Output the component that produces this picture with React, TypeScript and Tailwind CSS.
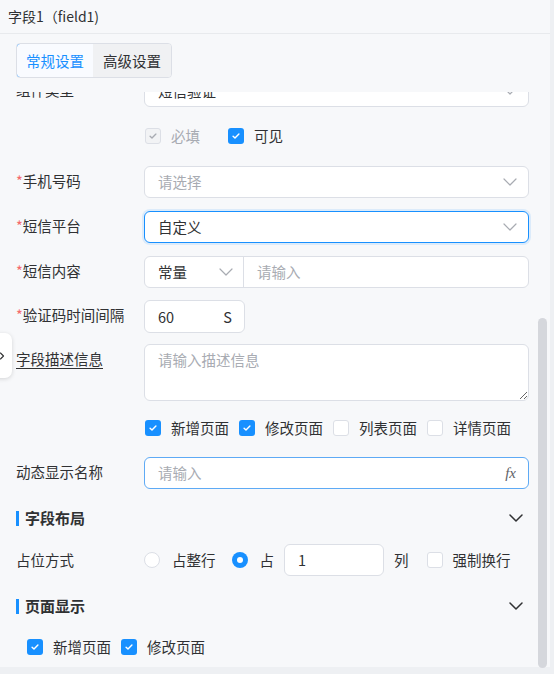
import { ChevronRight } from "lucide-react";

const font = { fontFamily: '"Noto Sans CJK SC", "Noto Sans", sans-serif' };

function Chevron({ dark = false }: { dark?: boolean }) {
  return (
    <svg viewBox="0 0 14 8" className="h-[8px] w-[14px] shrink-0">
      <path
        d="M1 1l6 6 6-6"
        fill="none"
        stroke={dark ? "#303133" : "#a8abb2"}
        strokeWidth={dark ? 1.5 : 1.2}
        strokeLinecap="round"
        strokeLinejoin="round"
      />
    </svg>
  );
}

function Box({ checked = false, disabled = false }: { checked?: boolean; disabled?: boolean }) {
  if (disabled) {
    return (
      <span className="flex h-4 w-4 shrink-0 items-center justify-center rounded-[3px] border border-[#dcdfe6] bg-[#f2f3f5]">
        <svg viewBox="0 0 12 12" className="h-[10px] w-[10px]">
          <path d="M2.5 6.2l2.3 2.3 4.7-4.8" fill="none" stroke="#a8abb2" strokeWidth="1.6" strokeLinecap="round" strokeLinejoin="round" />
        </svg>
      </span>
    );
  }
  return checked ? (
    <span className="flex h-4 w-4 shrink-0 items-center justify-center rounded-[3px] bg-[#1890ff]">
      <svg viewBox="0 0 12 12" className="h-[10px] w-[10px]">
        <path d="M2.5 6.2l2.3 2.3 4.7-4.8" fill="none" stroke="#fff" strokeWidth="1.7" strokeLinecap="round" strokeLinejoin="round" />
      </svg>
    </span>
  ) : (
    <span className="h-4 w-4 shrink-0 rounded-[3px] border border-[#dcdfe6] bg-white" />
  );
}

function CheckItem({ label, checked, disabled }: { label: string; checked?: boolean; disabled?: boolean }) {
  return (
    <span className="flex items-center gap-[10px]">
      <Box checked={checked} disabled={disabled} />
      <span className={disabled ? "text-[#a8abb2]" : "text-[#303133]"}>{label}</span>
    </span>
  );
}

function Label({ text, required, underline }: { text: string; required?: boolean; underline?: boolean }) {
  return (
    <div className="w-[128px] shrink-0 whitespace-nowrap leading-[30px] text-[#303133]">
      {required ? <span className="text-[#f56c6c]">*</span> : null}
      <span className={underline ? "underline underline-offset-[3px]" : ""}>{text}</span>
    </div>
  );
}

function Select({ value, placeholder, focused }: { value?: string; placeholder?: string; focused?: boolean }) {
  return (
    <div
      className={
        "flex h-8 flex-1 items-center justify-between rounded-[6px] border bg-white pl-[13px] pr-[11px] " +
        (focused ? "border-[#1890ff] shadow-[0_0_0_2px_rgba(24,144,255,0.12)]" : "border-[#dcdfe6]")
      }
    >
      <span className={value ? "text-[#303133]" : "text-[#a8abb2]"}>{value ?? placeholder}</span>
      <Chevron />
    </div>
  );
}

function Section({ title }: { title: string }) {
  return (
    <div className="flex h-8 items-center justify-between pr-[6px]">
      <div className="flex items-center gap-[6px]">
        <span className="h-[15px] w-[3px] bg-[#1890ff]" />
        <span className="text-[15px] font-bold text-[#303133]">{title}</span>
      </div>
      <Chevron dark />
    </div>
  );
}

export default function App() {
  return (
    <div className="h-[674px] w-[554px] overflow-hidden bg-[#eef0f3] text-[14.5px]" style={font}>
      <div className="relative flex h-[667px] w-[550px] flex-col bg-[#f7f8fa]">
        <div className="flex h-[34px] shrink-0 items-center border-b border-[#e8eaed] pl-2 text-[14px] text-[#303133]">
          字段1（field1)
        </div>

        <div className="shrink-0 pl-4 pt-[9px]">
          <div className="flex h-[35px] w-[156px] overflow-hidden rounded-[4px] border border-[#dcdfe6]">
            <div className="-m-px flex w-[78px] items-center justify-center rounded-l-[4px] border border-[#1890ff] bg-[#f9fbff] text-[#1890ff]">
              常规设置
            </div>
            <div className="flex flex-1 items-center justify-center bg-[#f0f1f3] text-[#303133]">高级设置</div>
          </div>
        </div>

        <div className="relative mt-[14px] flex-1 overflow-hidden">
          <div className="-mt-[17px] pl-4 pr-[21px]">
            <div className="flex">
              <Label text="组件类型" />
              <Select value="短信验证" />
            </div>

            <div className="mt-[13px] flex h-8 items-center gap-[10px] pl-[129px]">
              <CheckItem label="必填" disabled />
              <span className="w-[8px]" />
              <CheckItem label="可见" checked />
            </div>

            <div className="mt-[14px] flex">
              <Label text="手机号码" required />
              <Select placeholder="请选择" />
            </div>

            <div className="mt-[13px] flex">
              <Label text="短信平台" required />
              <Select value="自定义" focused />
            </div>

            <div className="mt-[13px] flex">
              <Label text="短信内容" required />
              <div className="flex h-8 flex-1 rounded-[6px] border border-[#dcdfe6] bg-white">
                <div className="flex w-[99px] items-center justify-between border-r border-[#dcdfe6] pl-[13px] pr-[10px] text-[#303133]">
                  常量
                  <Chevron />
                </div>
                <div className="flex flex-1 items-center pl-[13px] text-[#a8abb2]">请输入</div>
              </div>
            </div>

            <div className="mt-[12px] flex">
              <Label text="验证码时间间隔" required />
              <div className="flex h-[33px] w-[101px] items-center justify-between rounded-[6px] border border-[#dcdfe6] bg-white pl-[13px] pr-[12px] text-[#303133]">
                <span>60</span>
                <span>S</span>
              </div>
            </div>

            <div className="mt-[11px] flex">
              <Label text="字段描述信息" underline />
              <textarea
                readOnly
                placeholder="请输入描述信息"
                className="h-[57px] flex-1 resize-y rounded-[6px] border border-[#dcdfe6] bg-white px-[13px] py-[4px] leading-[22px] text-[#303133] outline-none placeholder:text-[#a8abb2]"
              />
            </div>

            <div className="mt-[11px] flex h-8 items-center gap-[10px] pl-[129px]">
              <CheckItem label="新增页面" checked />
              <CheckItem label="修改页面" checked />
              <CheckItem label="列表页面" />
              <CheckItem label="详情页面" />
            </div>

            <div className="mt-[13px] flex">
              <Label text="动态显示名称" />
              <div className="flex h-8 flex-1 items-center justify-between rounded-[6px] border border-[#5eaaf5] bg-white pl-[13px] pr-[12px]">
                <span className="text-[#a8abb2]">请输入</span>
                <span className="italic text-[#606266]" style={{ fontFamily: '"Liberation Serif", serif', fontSize: 15 }}>
                  fx
                </span>
              </div>
            </div>

            <div className="mt-[13px]">
              <Section title="字段布局" />
            </div>

            <div className="mt-[10px] flex items-center">
              <div className="w-[128px] shrink-0 text-[#303133]">占位方式</div>
              <span className="flex items-center gap-3">
                <span className="h-4 w-4 rounded-full border border-[#dcdfe6] bg-white" />
                <span className="text-[#303133]">占整行</span>
              </span>
              <span className="ml-[16px] flex items-center gap-3">
                <span className="flex h-4 w-4 items-center justify-center rounded-full bg-[#1890ff]">
                  <span className="h-[6px] w-[6px] rounded-full bg-white" />
                </span>
                <span className="text-[#303133]">占</span>
              </span>
              <div className="ml-[10px] flex h-8 w-[100px] items-center rounded-[6px] border border-[#dcdfe6] bg-white pl-[13px] text-[#303133]">
                1
              </div>
              <span className="ml-[10px] text-[#303133]">列</span>
              <span className="ml-[18px]">
                <CheckItem label="强制换行" />
              </span>
            </div>

            <div className="mt-[14px]">
              <Section title="页面显示" />
            </div>

            <div className="mt-[9px] flex h-8 items-center gap-[10px] pl-[11px]">
              <CheckItem label="新增页面" checked />
              <CheckItem label="修改页面" checked />
            </div>
          </div>
        </div>

        <div className="absolute right-[3px] top-[318px] h-[350px] w-[9px] rounded-full bg-[#d5d7dc]" />

        <div className="absolute left-[-13px] top-[333px] flex h-[45px] w-[25px] items-center rounded-[7px] bg-white pl-[9px] shadow-[0_1px_4px_rgba(0,0,0,0.15)]">
          <ChevronRight className="h-[12px] w-[12px] text-[#303133]" strokeWidth={2.2} />
        </div>
      </div>
    </div>
  );
}
